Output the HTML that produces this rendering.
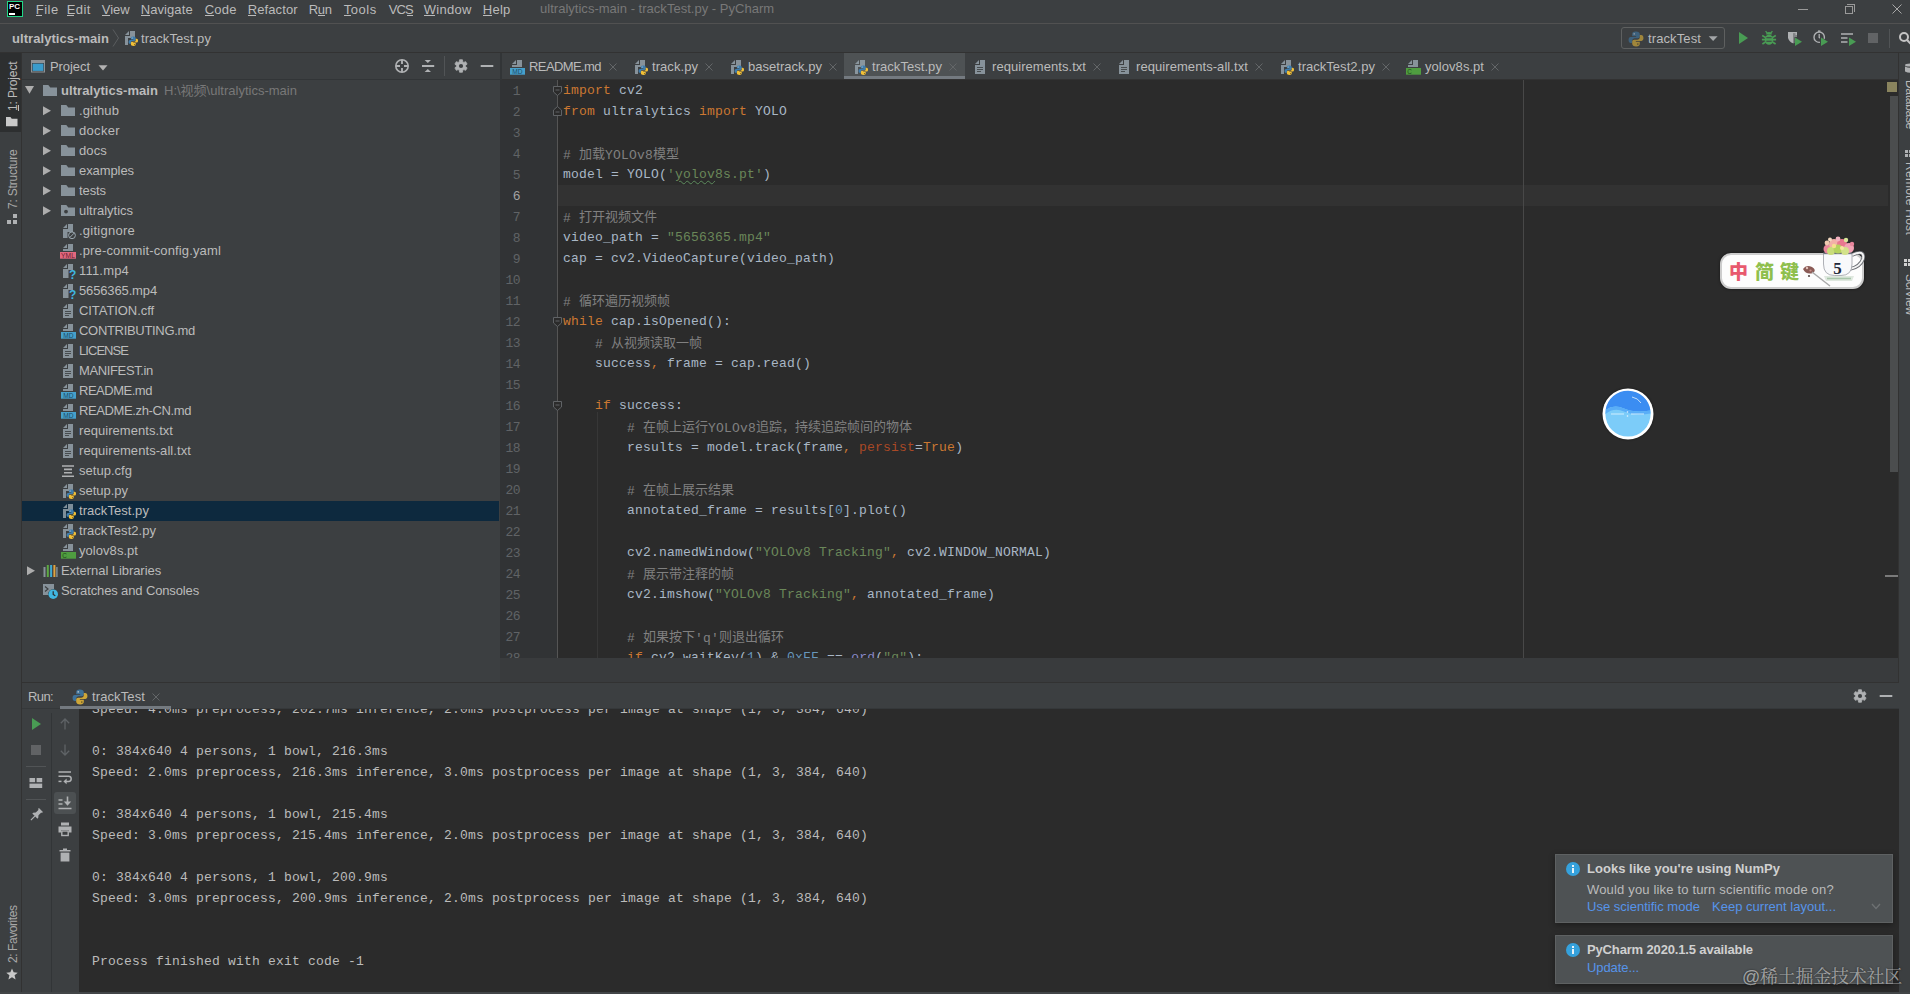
<!DOCTYPE html>
<html lang="zh"><head><meta charset="utf-8"><title>ultralytics-main - trackTest.py - PyCharm</title>
<style>
html,body{margin:0;padding:0;background:#3c3f41;}
body{width:1910px;height:994px;overflow:hidden;}
#root{position:relative;width:1910px;height:994px;overflow:hidden;background:#3c3f41;font-family:"Liberation Sans","Noto Sans CJK SC",sans-serif;font-size:13px;color:#bbbbbb;}
#root div,#root span.t,#root svg{position:absolute;}
#root svg{overflow:visible;}
span.t{white-space:pre;}
.code{font-family:"Liberation Mono","Noto Sans CJK SC",monospace;font-size:13px;letter-spacing:0.2px;white-space:pre;color:#a9b7c6;position:absolute;line-height:21px;height:21px;}
.code i{font-style:normal;}
.k{color:#cc7832}.s{color:#6a8759}.c{color:#808080}.n{color:#6897bb}.a{color:#aa4926}.b{color:#8888c6}
.cj{font-family:"Noto Sans CJK SC",sans-serif;letter-spacing:0;font-size:13px;position:relative;top:-1.5px;}
.code u{text-decoration:underline wavy #5c8a5c;text-decoration-thickness:1px;text-underline-offset:2px;}
.con{font-family:"Liberation Mono","Noto Sans CJK SC",monospace;font-size:13px;letter-spacing:0.2px;white-space:pre;color:#bbbbbb;position:absolute;line-height:21px;height:21px;}
.ln{font-family:"Liberation Mono",monospace;font-size:13px;letter-spacing:-0.6px;color:#606366;position:absolute;line-height:21px;height:21px;text-align:right;width:20px;}
.vt{position:absolute;white-space:pre;transform-origin:0 0;font-size:12px;color:#bbbbbb;line-height:14px;}

</style></head>
<body>
<div id="root">
<div style="left:0px;top:0px;width:1910px;height:23px;background:#3c3f41;"></div>
<div style="left:0px;top:23px;width:1910px;height:1px;background:#515151;"></div>
<div style="left:7px;top:1px;width:16px;height:16px;background:#000;box-shadow:0 0 0 1px #21d789 inset;"></div>
<span class="t " style="left:9px;top:2.5px;line-height:8px;font-family:'Liberation Sans','Noto Sans CJK SC',sans-serif;font-size:8px;font-weight:bold;color:#ffffff;letter-spacing:-0.06px;">PC</span>
<div style="left:9px;top:13px;width:6px;height:1.5px;background:#ffffff;"></div>
<span class="t " style="left:35.7px;top:0.6999999999999993px;line-height:18px;font-family:'Liberation Sans','Noto Sans CJK SC',sans-serif;font-size:13px;font-weight:normal;color:#bbbbbb;letter-spacing:0.51px;">File</span>
<span class="t " style="left:66.7px;top:0.6999999999999993px;line-height:18px;font-family:'Liberation Sans','Noto Sans CJK SC',sans-serif;font-size:13px;font-weight:normal;color:#bbbbbb;letter-spacing:0.40px;">Edit</span>
<span class="t " style="left:101.7px;top:0.6999999999999993px;line-height:18px;font-family:'Liberation Sans','Noto Sans CJK SC',sans-serif;font-size:13px;font-weight:normal;color:#bbbbbb;letter-spacing:0.01px;">View</span>
<span class="t " style="left:140.7px;top:0.6999999999999993px;line-height:18px;font-family:'Liberation Sans','Noto Sans CJK SC',sans-serif;font-size:13px;font-weight:normal;color:#bbbbbb;letter-spacing:0.09px;">Navigate</span>
<span class="t " style="left:204.7px;top:0.6999999999999993px;line-height:18px;font-family:'Liberation Sans','Noto Sans CJK SC',sans-serif;font-size:13px;font-weight:normal;color:#bbbbbb;letter-spacing:0.23px;">Code</span>
<span class="t " style="left:247.7px;top:0.6999999999999993px;line-height:18px;font-family:'Liberation Sans','Noto Sans CJK SC',sans-serif;font-size:13px;font-weight:normal;color:#bbbbbb;letter-spacing:0.11px;">Refactor</span>
<span class="t " style="left:308.7px;top:0.6999999999999993px;line-height:18px;font-family:'Liberation Sans','Noto Sans CJK SC',sans-serif;font-size:13px;font-weight:normal;color:#bbbbbb;letter-spacing:-0.29px;">Run</span>
<span class="t " style="left:343.7px;top:0.6999999999999993px;line-height:18px;font-family:'Liberation Sans','Noto Sans CJK SC',sans-serif;font-size:13px;font-weight:normal;color:#bbbbbb;letter-spacing:0.53px;">Tools</span>
<span class="t " style="left:388.7px;top:0.6999999999999993px;line-height:18px;font-family:'Liberation Sans','Noto Sans CJK SC',sans-serif;font-size:13px;font-weight:normal;color:#bbbbbb;letter-spacing:-0.91px;">VCS</span>
<span class="t " style="left:423.7px;top:0.6999999999999993px;line-height:18px;font-family:'Liberation Sans','Noto Sans CJK SC',sans-serif;font-size:13px;font-weight:normal;color:#bbbbbb;letter-spacing:0.29px;">Window</span>
<span class="t " style="left:482.7px;top:0.6999999999999993px;line-height:18px;font-family:'Liberation Sans','Noto Sans CJK SC',sans-serif;font-size:13px;font-weight:normal;color:#bbbbbb;letter-spacing:0.31px;">Help</span>
<span class="t " style="left:540px;top:0.0px;line-height:18px;font-family:'Liberation Sans','Noto Sans CJK SC',sans-serif;font-size:13px;font-weight:normal;color:#787878;letter-spacing:0.02px;">ultralytics-main - trackTest.py - PyCharm</span>
<div style="left:35.5px;top:15.3px;width:6px;height:1px;background:#bbbbbb;"></div>
<div style="left:66.5px;top:15.3px;width:7px;height:1px;background:#bbbbbb;"></div>
<div style="left:101.5px;top:15.3px;width:8px;height:1px;background:#bbbbbb;"></div>
<div style="left:140.5px;top:15.3px;width:9px;height:1px;background:#bbbbbb;"></div>
<div style="left:204.5px;top:15.3px;width:9px;height:1px;background:#bbbbbb;"></div>
<div style="left:247.5px;top:15.3px;width:8px;height:1px;background:#bbbbbb;"></div>
<div style="left:317.5px;top:15.3px;width:7px;height:1px;background:#bbbbbb;"></div>
<div style="left:343.5px;top:15.3px;width:7px;height:1px;background:#bbbbbb;"></div>
<div style="left:406.5px;top:15.3px;width:6px;height:1px;background:#bbbbbb;"></div>
<div style="left:423.5px;top:15.3px;width:11px;height:1px;background:#bbbbbb;"></div>
<div style="left:482.5px;top:15.3px;width:9px;height:1px;background:#bbbbbb;"></div>
<div style="left:1798px;top:9px;width:10px;height:1px;background:#9a9a9a;"></div>
<div style="left:1845px;top:6px;width:8px;height:8px;border:1px solid #9a9a9a;box-sizing:border-box;"></div>
<div style="left:1847px;top:4px;width:8px;height:8px;border-top:1px solid #9a9a9a;border-right:1px solid #9a9a9a;box-sizing:border-box;"></div>
<svg style="left:1892px;top:4px;" width="10" height="10" viewBox="0 0 10 10"><path d="M0.5 0.5 L9.5 9.5 M9.5 0.5 L0.5 9.5" stroke="#a8a8a8" stroke-width="1" fill="none"/></svg>
<div style="left:0px;top:24px;width:1910px;height:28px;background:#3c3f41;"></div>
<div style="left:0px;top:52px;width:1910px;height:1px;background:#323232;"></div>
<span class="t " style="left:12px;top:28.5px;line-height:20px;font-family:'Liberation Sans','Noto Sans CJK SC',sans-serif;font-size:13px;font-weight:bold;color:#bbbbbb;letter-spacing:0.06px;">ultralytics-main</span>
<svg style="left:112px;top:29px;" width="8" height="18" viewBox="0 0 8 18"><path d="M1 0.5 L6.5 9 L1 17.5" stroke="#5a5d5f" stroke-width="1" fill="none"/></svg>
<svg style="left:122px;top:30px;" width="16" height="16" viewBox="0 0 16 16"><path fill="#9aa7b0" fill-opacity="0.8" d="M7 1 L3 5 L7 5 Z"/><path fill="#9aa7b0" fill-opacity="0.8" d="M8 1 V6 H3 V15 H6 V8 H13 V1 Z"/><g transform="translate(6.575,6.575) scale(1.05)"><path fill="#3f7eae" d="M4.4 0 C2.6 0 2.2 0.8 2.2 1.6 V2.8 H4.6 V3.3 H1.4 C0.4 3.3 0 4.1 0 5.1 C0 6.2 0.5 6.9 1.4 6.9 H2.2 V5.6 C2.2 4.7 2.9 4.1 3.8 4.1 H5.6 C6.3 4.1 6.8 3.6 6.8 2.9 V1.6 C6.8 0.6 5.9 0 4.4 0 Z"/><path fill="#f2c037" d="M4.6 9 C6.4 9 6.8 8.2 6.8 7.4 V6.2 H4.4 V5.7 H7.6 C8.6 5.7 9 4.9 9 3.9 C9 2.8 8.5 2.1 7.6 2.1 H6.8 V3.4 C6.8 4.3 6.1 4.9 5.2 4.9 H3.4 C2.7 4.9 2.2 5.4 2.2 6.1 V7.4 C2.2 8.4 3.1 9 4.6 9 Z"/><circle cx="3.4" cy="1.4" r="0.5" fill="#d8e4ee"/><circle cx="5.6" cy="7.6" r="0.5" fill="#6b5a20"/></g></svg>
<span class="t " style="left:141px;top:28.5px;line-height:20px;font-family:'Liberation Sans','Noto Sans CJK SC',sans-serif;font-size:13px;font-weight:normal;color:#bbbbbb;letter-spacing:0.05px;">trackTest.py</span>
<div style="left:1621px;top:27px;width:104px;height:22px;border:1px solid #5e6060;border-radius:3px;box-sizing:border-box;"></div>
<svg style="left:1628px;top:30.7px;opacity:0.55;" width="16" height="16" viewBox="0 0 16 16"><g transform="translate(0.5750000000000002,0.5750000000000002) scale(1.65)"><path fill="#3f7eae" d="M4.4 0 C2.6 0 2.2 0.8 2.2 1.6 V2.8 H4.6 V3.3 H1.4 C0.4 3.3 0 4.1 0 5.1 C0 6.2 0.5 6.9 1.4 6.9 H2.2 V5.6 C2.2 4.7 2.9 4.1 3.8 4.1 H5.6 C6.3 4.1 6.8 3.6 6.8 2.9 V1.6 C6.8 0.6 5.9 0 4.4 0 Z"/><path fill="#f2c037" d="M4.6 9 C6.4 9 6.8 8.2 6.8 7.4 V6.2 H4.4 V5.7 H7.6 C8.6 5.7 9 4.9 9 3.9 C9 2.8 8.5 2.1 7.6 2.1 H6.8 V3.4 C6.8 4.3 6.1 4.9 5.2 4.9 H3.4 C2.7 4.9 2.2 5.4 2.2 6.1 V7.4 C2.2 8.4 3.1 9 4.6 9 Z"/><circle cx="3.4" cy="1.4" r="0.5" fill="#d8e4ee"/><circle cx="5.6" cy="7.6" r="0.5" fill="#6b5a20"/></g></svg>
<span class="t " style="left:1648px;top:28.6px;line-height:20px;font-family:'Liberation Sans','Noto Sans CJK SC',sans-serif;font-size:13px;font-weight:normal;color:#bbbbbb;letter-spacing:0.11px;">trackTest</span>
<svg style="left:1708px;top:36px;" width="10" height="6" viewBox="0 0 10 6"><path d="M0.7 0.3 H9.6 L5.1 4.9 Z" fill="#a3a6a8"/></svg>
<svg style="left:1735px;top:30px;" width="16" height="16" viewBox="0 0 16 16"><path fill="#499c54" d="M4 2 L13 8 L4 14 Z"/></svg>
<svg style="left:1761px;top:30px;" width="16" height="16" viewBox="0 0 16 16"><ellipse cx="8" cy="9.6" rx="4.3" ry="5.2" fill="#499c54"/><path d="M5.2 4.6 A2.8 2.6 0 0 1 10.8 4.6 Z" fill="#499c54"/><path d="M4.6 1.2 L6.4 3.4 M11.4 1.2 L9.6 3.4" stroke="#499c54" stroke-width="1.3" fill="none"/><path d="M1.2 5.6 L4.6 7.4 M14.8 5.6 L11.4 7.4 M0.9 9.6 H4 M15.1 9.6 H12 M1.4 14 L4.6 12 M14.6 14 L11.4 12" stroke="#499c54" stroke-width="1.7" fill="none"/><path d="M5.4 7.8 H10.6 M5.4 11.2 H10.6" stroke="#3c3f41" stroke-width="1.1"/></svg>
<svg style="left:1786px;top:30px;" width="16" height="16" viewBox="0 0 16 16"><path fill="#afb1b3" d="M2 2 H11 V5 H9.5 V3.6 H7 V13.2 Q3.2 12 2 8 Z"/><path fill="#afb1b3" fill-opacity="0.6" d="M7 3.6 H11 V7 H8.5 V13 Q7.6 13.3 7 13.4 Z"/><path fill="#499c54" d="M9 7.5 L16 11.7 L9 16 Z"/></svg>
<svg style="left:1812px;top:30px;" width="16" height="16" viewBox="0 0 16 16"><circle cx="7.2" cy="7.2" r="5.2" fill="none" stroke="#afb1b3" stroke-width="1.4"/><path d="M7.2 4 V7.4 L9.2 8.6" fill="none" stroke="#afb1b3" stroke-width="1.3"/><rect x="6" y="0.4" width="2.4" height="1.5" fill="#afb1b3"/><path fill="#3c3f41" d="M8 6.6 L17 11.7 L8 17 Z"/><path fill="#499c54" d="M9 7.5 L16 11.7 L9 16 Z"/></svg>
<svg style="left:1840px;top:30.5px;" width="16" height="16" viewBox="0 0 16 16"><path d="M1 3 H13 M1 7 H7.5 M1 11 H7.5" stroke="#afb1b3" stroke-width="1.7" fill="none"/><path fill="#499c54" d="M9 6.5 L16 10.7 L9 15 Z"/></svg>
<svg style="left:1865px;top:30px;" width="16" height="16" viewBox="0 0 16 16"><rect x="3" y="3" width="10" height="10" fill="#616365"/></svg>
<div style="left:1889px;top:29px;width:1px;height:19px;background:#515456;"></div>
<svg style="left:1896.7px;top:29.5px;" width="16" height="16" viewBox="0 0 16 16"><circle cx="7" cy="7" r="4" fill="none" stroke="#c4c4c4" stroke-width="2"/><path d="M10 10 L14 14" stroke="#c4c4c4" stroke-width="2.2"/></svg>
<div style="left:0px;top:53px;width:21px;height:941px;background:#3c3f41;"></div>
<div style="left:21px;top:53px;width:1px;height:941px;background:#323232;"></div>
<div style="left:0px;top:53px;width:21px;height:79px;background:#2d2f30;"></div>
<span class="vt" style="left:5.8px;top:111.3px;transform:rotate(-90deg);font-size:12px;color:#bbbbbb;letter-spacing:-0.12px;">1: Project</span>
<div style="left:17.8px;top:105px;width:1px;height:6px;background:#bbbbbb;"></div>
<svg style="left:5.8px;top:117px;" width="11.5" height="9.3" viewBox="0 0 13 10.5"><path fill="#c9c9c9" d="M0 0 H5 L6.5 2 H13 V10.5 H0 Z"/></svg>
<span class="vt" style="left:5.5px;top:209px;transform:rotate(-90deg);font-size:12px;color:#a8a8a8;letter-spacing:-0.21px;">7: Structure</span>
<svg style="left:7px;top:213px;" width="12" height="12" viewBox="0 0 12 12"><rect x="0" y="7" width="4" height="4" fill="#afb1b3"/><rect x="6" y="7" width="4" height="4" fill="#afb1b3"/><rect x="6" y="1" width="4" height="4" fill="#afb1b3"/></svg>
<span class="vt" style="left:5.5px;top:962.5px;transform:rotate(-90deg);font-size:12px;color:#a8a8a8;letter-spacing:-0.43px;">2: Favorites</span>
<svg style="left:5.5px;top:968px;" width="12" height="12" viewBox="0 0 14 14"><path fill="#c8c8c8" d="M7 0.5 L8.9 5 L13.7 5.4 L10 8.6 L11.2 13.4 L7 10.8 L2.8 13.4 L4 8.6 L0.3 5.4 L5.1 5 Z"/></svg>
<div style="left:22px;top:53px;width:478px;height:26px;background:#3c3f41;"></div>
<div style="left:22px;top:79px;width:478px;height:1px;background:#323537;"></div>
<svg style="left:30px;top:58.3px;" width="16" height="16" viewBox="0 0 16 16"><rect x="1" y="2" width="14" height="12.5" fill="#8d9296"/><rect x="2" y="5" width="12" height="8.5" fill="#3c3f41"/><rect x="2.6" y="5.6" width="10.8" height="7.3" fill="#3a9ccc"/></svg>
<span class="t " style="left:50px;top:56.5px;line-height:20px;font-family:'Liberation Sans','Noto Sans CJK SC',sans-serif;font-size:13px;font-weight:normal;color:#bbbbbb;letter-spacing:-0.07px;">Project</span>
<svg style="left:97.8px;top:64.5px;" width="10" height="6" viewBox="0 0 10 6"><path d="M0.5 0.3 H9.5 L5 5.5 Z" fill="#b2b2b2"/></svg>
<svg style="left:394px;top:58px;" width="16" height="16" viewBox="0 0 16 16"><circle cx="8" cy="8" r="6.2" fill="none" stroke="#afb1b3" stroke-width="1.6"/><path d="M8 1.8 V6 M8 10 V14.2 M1.8 8 H6 M10 8 H14.2" stroke="#afb1b3" stroke-width="1.9" fill="none"/></svg>
<svg style="left:420px;top:58px;" width="16" height="16" viewBox="0 0 16 16"><rect x="2" y="7" width="12.2" height="2" fill="#afb1b3"/><path d="M4.6 2 H11 L7.8 5.1 Z" fill="#afb1b3"/><path d="M4.6 14 H11 L7.8 10.9 Z" fill="#afb1b3"/></svg>
<div style="left:444px;top:56px;width:1px;height:20px;background:#515456;"></div>
<svg style="left:453px;top:58px;" width="16" height="16" viewBox="0 0 16 16"><polygon points="6.28,3.73 6.56,1.76 9.44,1.76 9.72,3.73 10.83,4.38 12.68,3.64 14.12,6.13 12.56,7.36 12.56,8.64 14.12,9.87 12.68,12.36 10.83,11.62 9.72,12.27 9.44,14.24 6.56,14.24 6.28,12.27 5.17,11.62 3.32,12.36 1.88,9.87 3.44,8.64 3.44,7.36 1.88,6.13 3.32,3.64 5.17,4.38" fill="#afb1b3" stroke="#afb1b3" stroke-width="0.8" stroke-linejoin="round"/><circle cx="8" cy="8" r="2.1" fill="#3c3f41"/></svg>
<svg style="left:479px;top:58px;" width="16" height="16" viewBox="0 0 16 16"><rect x="1.7" y="7" width="12.6" height="2" fill="#afb1b3"/></svg>
<svg style="left:22px;top:83px;" width="16" height="16" viewBox="0 0 16 16"><path fill="#adadad" d="M3 3 H12 L7.5 10.8 Z"/></svg>
<svg style="left:42px;top:83px;" width="16" height="16" viewBox="0 0 16 16"><path fill="#9aa7b0" fill-opacity="0.8" d="M1 2 H6.3 L8.3 4.5 H15 V13 H1 Z"/></svg>
<span class="t " style="left:61px;top:81.0px;line-height:20px;font-family:'Liberation Sans','Noto Sans CJK SC',sans-serif;font-size:13px;font-weight:bold;color:#bbbbbb;letter-spacing:0.06px;">ultralytics-main</span>
<span class="t " style="left:164px;top:81.0px;line-height:20px;font-family:'Liberation Sans','Noto Sans CJK SC',sans-serif;font-size:13px;font-weight:normal;color:#787878;letter-spacing:0.00px;">H:\视频\ultralytics-main</span>
<svg style="left:38px;top:103px;" width="16" height="16" viewBox="0 0 16 16"><path fill="#adadad" d="M5 3.2 L13 7.7 L5 12.2 Z"/></svg>
<svg style="left:60px;top:103px;" width="16" height="16" viewBox="0 0 16 16"><path fill="#9aa7b0" fill-opacity="0.8" d="M1 2 H6.3 L8.3 4.5 H15 V13 H1 Z"/></svg>
<span class="t " style="left:79px;top:101.0px;line-height:20px;font-family:'Liberation Sans','Noto Sans CJK SC',sans-serif;font-size:13px;font-weight:normal;color:#bbbbbb;letter-spacing:0.14px;">.github</span>
<svg style="left:38px;top:123px;" width="16" height="16" viewBox="0 0 16 16"><path fill="#adadad" d="M5 3.2 L13 7.7 L5 12.2 Z"/></svg>
<svg style="left:60px;top:123px;" width="16" height="16" viewBox="0 0 16 16"><path fill="#9aa7b0" fill-opacity="0.8" d="M1 2 H6.3 L8.3 4.5 H15 V13 H1 Z"/></svg>
<span class="t " style="left:79px;top:121.0px;line-height:20px;font-family:'Liberation Sans','Noto Sans CJK SC',sans-serif;font-size:13px;font-weight:normal;color:#bbbbbb;letter-spacing:0.33px;">docker</span>
<svg style="left:38px;top:143px;" width="16" height="16" viewBox="0 0 16 16"><path fill="#adadad" d="M5 3.2 L13 7.7 L5 12.2 Z"/></svg>
<svg style="left:60px;top:143px;" width="16" height="16" viewBox="0 0 16 16"><path fill="#9aa7b0" fill-opacity="0.8" d="M1 2 H6.3 L8.3 4.5 H15 V13 H1 Z"/></svg>
<span class="t " style="left:79px;top:141.0px;line-height:20px;font-family:'Liberation Sans','Noto Sans CJK SC',sans-serif;font-size:13px;font-weight:normal;color:#bbbbbb;letter-spacing:0.13px;">docs</span>
<svg style="left:38px;top:163px;" width="16" height="16" viewBox="0 0 16 16"><path fill="#adadad" d="M5 3.2 L13 7.7 L5 12.2 Z"/></svg>
<svg style="left:60px;top:163px;" width="16" height="16" viewBox="0 0 16 16"><path fill="#9aa7b0" fill-opacity="0.8" d="M1 2 H6.3 L8.3 4.5 H15 V13 H1 Z"/></svg>
<span class="t " style="left:79px;top:161.0px;line-height:20px;font-family:'Liberation Sans','Noto Sans CJK SC',sans-serif;font-size:13px;font-weight:normal;color:#bbbbbb;letter-spacing:-0.08px;">examples</span>
<svg style="left:38px;top:183px;" width="16" height="16" viewBox="0 0 16 16"><path fill="#adadad" d="M5 3.2 L13 7.7 L5 12.2 Z"/></svg>
<svg style="left:60px;top:183px;" width="16" height="16" viewBox="0 0 16 16"><path fill="#9aa7b0" fill-opacity="0.8" d="M1 2 H6.3 L8.3 4.5 H15 V13 H1 Z"/></svg>
<span class="t " style="left:79px;top:181.0px;line-height:20px;font-family:'Liberation Sans','Noto Sans CJK SC',sans-serif;font-size:13px;font-weight:normal;color:#bbbbbb;letter-spacing:-0.09px;">tests</span>
<svg style="left:38px;top:203px;" width="16" height="16" viewBox="0 0 16 16"><path fill="#adadad" d="M5 3.2 L13 7.7 L5 12.2 Z"/></svg>
<svg style="left:60px;top:203px;" width="16" height="16" viewBox="0 0 16 16"><path fill="#9aa7b0" fill-opacity="0.8" d="M1 2 H6.3 L8.3 4.5 H15 V13 H1 Z"/><circle cx="6" cy="8.6" r="1.9" fill="#3c3f41"/></svg>
<span class="t " style="left:79px;top:201.0px;line-height:20px;font-family:'Liberation Sans','Noto Sans CJK SC',sans-serif;font-size:13px;font-weight:normal;color:#bbbbbb;letter-spacing:-0.02px;">ultralytics</span>
<svg style="left:60px;top:223px;" width="16" height="16" viewBox="0 0 16 16"><path fill="#9aa7b0" fill-opacity="0.8" d="M7 1 L3 5 L7 5 Z"/><path fill="#9aa7b0" fill-opacity="0.8" d="M8 1 V6 H3 V15 H7.5 V9 H13 V1 Z"/><circle cx="12" cy="12.3" r="3.4" fill="none" stroke="#9aa7b0" stroke-width="1"/><path d="M9.6 14.7 L14.4 9.9" stroke="#9aa7b0" stroke-width="1"/></svg>
<span class="t " style="left:79px;top:221.0px;line-height:20px;font-family:'Liberation Sans','Noto Sans CJK SC',sans-serif;font-size:13px;font-weight:normal;color:#bbbbbb;letter-spacing:0.25px;">.gitignore</span>
<svg style="left:60px;top:243px;" width="16" height="16" viewBox="0 0 16 16"><path fill="#9aa7b0" fill-opacity="0.8" d="M7 1 L3 5 L7 5 Z"/><path fill="#9aa7b0" fill-opacity="0.8" d="M8 1 V6 H3 V8 H13 V1 Z"/><rect x="0" y="9" width="16" height="6.7" fill="#e2687f"/><text x="8.0" y="14.7" font-family="Liberation Sans,sans-serif" font-size="6.7" text-anchor="middle" fill="#6a1f30">YML</text></svg>
<span class="t " style="left:79px;top:241.0px;line-height:20px;font-family:'Liberation Sans','Noto Sans CJK SC',sans-serif;font-size:13px;font-weight:normal;color:#bbbbbb;letter-spacing:0.14px;">.pre-commit-config.yaml</span>
<svg style="left:60px;top:263px;" width="16" height="16" viewBox="0 0 16 16"><path fill="#9aa7b0" fill-opacity="0.8" d="M7 1 L3 5 L7 5 Z"/><path fill="#9aa7b0" fill-opacity="0.8" d="M8 1 V6 H3 V15 H8.5 V7 H13 V1 Z"/><text x="12.6" y="15.6" font-family="Liberation Sans,sans-serif" font-weight="bold" font-size="12" text-anchor="middle" fill="#40b6e0">?</text></svg>
<span class="t " style="left:79px;top:261.0px;line-height:20px;font-family:'Liberation Sans','Noto Sans CJK SC',sans-serif;font-size:13px;font-weight:normal;color:#bbbbbb;letter-spacing:0.19px;">111.mp4</span>
<svg style="left:60px;top:283px;" width="16" height="16" viewBox="0 0 16 16"><path fill="#9aa7b0" fill-opacity="0.8" d="M7 1 L3 5 L7 5 Z"/><path fill="#9aa7b0" fill-opacity="0.8" d="M8 1 V6 H3 V15 H8.5 V7 H13 V1 Z"/><text x="12.6" y="15.6" font-family="Liberation Sans,sans-serif" font-weight="bold" font-size="12" text-anchor="middle" fill="#40b6e0">?</text></svg>
<span class="t " style="left:79px;top:281.0px;line-height:20px;font-family:'Liberation Sans','Noto Sans CJK SC',sans-serif;font-size:13px;font-weight:normal;color:#bbbbbb;letter-spacing:-0.14px;">5656365.mp4</span>
<svg style="left:60px;top:303px;" width="16" height="16" viewBox="0 0 16 16"><path fill="#9aa7b0" fill-opacity="0.8" d="M7 1 L3 5 L7 5 Z"/><path fill="#9aa7b0" fill-opacity="0.8" d="M8 1 V6 H3 V15 H13 V1 Z"/><path stroke="#3c3f41" stroke-opacity="0.85" stroke-width="1" d="M5 8.5 H11 M5 10.5 H11 M5 12.5 H9"/></svg>
<span class="t " style="left:79px;top:301.0px;line-height:20px;font-family:'Liberation Sans','Noto Sans CJK SC',sans-serif;font-size:13px;font-weight:normal;color:#bbbbbb;letter-spacing:-0.07px;">CITATION.cff</span>
<svg style="left:60px;top:323px;" width="16" height="16" viewBox="0 0 16 16"><path fill="#9aa7b0" fill-opacity="0.8" d="M7 1 L3 5 L7 5 Z"/><path fill="#9aa7b0" fill-opacity="0.8" d="M8 1 V6 H3 V8 H13 V1 Z"/><rect x="1" y="9" width="15" height="6.7" fill="#46a0cc"/><text x="8.5" y="14.7" font-family="Liberation Sans,sans-serif" font-size="6.6" text-anchor="middle" fill="#1d4a66">MD</text></svg>
<span class="t " style="left:79px;top:321.0px;line-height:20px;font-family:'Liberation Sans','Noto Sans CJK SC',sans-serif;font-size:13px;font-weight:normal;color:#bbbbbb;letter-spacing:-0.31px;">CONTRIBUTING.md</span>
<svg style="left:60px;top:343px;" width="16" height="16" viewBox="0 0 16 16"><path fill="#9aa7b0" fill-opacity="0.8" d="M7 1 L3 5 L7 5 Z"/><path fill="#9aa7b0" fill-opacity="0.8" d="M8 1 V6 H3 V15 H13 V1 Z"/><path stroke="#3c3f41" stroke-opacity="0.85" stroke-width="1" d="M5 8.5 H11 M5 10.5 H11 M5 12.5 H9"/></svg>
<span class="t " style="left:79px;top:341.0px;line-height:20px;font-family:'Liberation Sans','Noto Sans CJK SC',sans-serif;font-size:13px;font-weight:normal;color:#bbbbbb;letter-spacing:-0.95px;">LICENSE</span>
<svg style="left:60px;top:363px;" width="16" height="16" viewBox="0 0 16 16"><path fill="#9aa7b0" fill-opacity="0.8" d="M7 1 L3 5 L7 5 Z"/><path fill="#9aa7b0" fill-opacity="0.8" d="M8 1 V6 H3 V15 H13 V1 Z"/><path stroke="#3c3f41" stroke-opacity="0.85" stroke-width="1" d="M5 8.5 H11 M5 10.5 H11 M5 12.5 H9"/></svg>
<span class="t " style="left:79px;top:361.0px;line-height:20px;font-family:'Liberation Sans','Noto Sans CJK SC',sans-serif;font-size:13px;font-weight:normal;color:#bbbbbb;letter-spacing:-0.37px;">MANIFEST.in</span>
<svg style="left:60px;top:383px;" width="16" height="16" viewBox="0 0 16 16"><path fill="#9aa7b0" fill-opacity="0.8" d="M7 1 L3 5 L7 5 Z"/><path fill="#9aa7b0" fill-opacity="0.8" d="M8 1 V6 H3 V8 H13 V1 Z"/><rect x="1" y="9" width="15" height="6.7" fill="#46a0cc"/><text x="8.5" y="14.7" font-family="Liberation Sans,sans-serif" font-size="6.6" text-anchor="middle" fill="#1d4a66">MD</text></svg>
<span class="t " style="left:79px;top:381.0px;line-height:20px;font-family:'Liberation Sans','Noto Sans CJK SC',sans-serif;font-size:13px;font-weight:normal;color:#bbbbbb;letter-spacing:-0.48px;">README.md</span>
<svg style="left:60px;top:403px;" width="16" height="16" viewBox="0 0 16 16"><path fill="#9aa7b0" fill-opacity="0.8" d="M7 1 L3 5 L7 5 Z"/><path fill="#9aa7b0" fill-opacity="0.8" d="M8 1 V6 H3 V8 H13 V1 Z"/><rect x="1" y="9" width="15" height="6.7" fill="#46a0cc"/><text x="8.5" y="14.7" font-family="Liberation Sans,sans-serif" font-size="6.6" text-anchor="middle" fill="#1d4a66">MD</text></svg>
<span class="t " style="left:79px;top:401.0px;line-height:20px;font-family:'Liberation Sans','Noto Sans CJK SC',sans-serif;font-size:13px;font-weight:normal;color:#bbbbbb;letter-spacing:-0.38px;">README.zh-CN.md</span>
<svg style="left:60px;top:423px;" width="16" height="16" viewBox="0 0 16 16"><path fill="#9aa7b0" fill-opacity="0.8" d="M7 1 L3 5 L7 5 Z"/><path fill="#9aa7b0" fill-opacity="0.8" d="M8 1 V6 H3 V15 H13 V1 Z"/><path stroke="#3c3f41" stroke-opacity="0.85" stroke-width="1" d="M5 8.5 H11 M5 10.5 H11 M5 12.5 H9"/></svg>
<span class="t " style="left:79px;top:421.0px;line-height:20px;font-family:'Liberation Sans','Noto Sans CJK SC',sans-serif;font-size:13px;font-weight:normal;color:#bbbbbb;letter-spacing:0.05px;">requirements.txt</span>
<svg style="left:60px;top:443px;" width="16" height="16" viewBox="0 0 16 16"><path fill="#9aa7b0" fill-opacity="0.8" d="M7 1 L3 5 L7 5 Z"/><path fill="#9aa7b0" fill-opacity="0.8" d="M8 1 V6 H3 V15 H13 V1 Z"/><path stroke="#3c3f41" stroke-opacity="0.85" stroke-width="1" d="M5 8.5 H11 M5 10.5 H11 M5 12.5 H9"/></svg>
<span class="t " style="left:79px;top:441.0px;line-height:20px;font-family:'Liberation Sans','Noto Sans CJK SC',sans-serif;font-size:13px;font-weight:normal;color:#bbbbbb;letter-spacing:0.07px;">requirements-all.txt</span>
<svg style="left:60px;top:463px;" width="16" height="16" viewBox="0 0 16 16"><path fill="none" stroke="#afb1b3" stroke-width="1.6" d="M2 3 H14 M4 6.4 H12 M4 9.8 H12 M2 13.2 H14"/></svg>
<span class="t " style="left:79px;top:461.0px;line-height:20px;font-family:'Liberation Sans','Noto Sans CJK SC',sans-serif;font-size:13px;font-weight:normal;color:#bbbbbb;letter-spacing:0.03px;">setup.cfg</span>
<svg style="left:60px;top:483px;" width="16" height="16" viewBox="0 0 16 16"><path fill="#9aa7b0" fill-opacity="0.8" d="M7 1 L3 5 L7 5 Z"/><path fill="#9aa7b0" fill-opacity="0.8" d="M8 1 V6 H3 V15 H6 V8 H13 V1 Z"/><g transform="translate(6.575,6.575) scale(1.05)"><path fill="#3f7eae" d="M4.4 0 C2.6 0 2.2 0.8 2.2 1.6 V2.8 H4.6 V3.3 H1.4 C0.4 3.3 0 4.1 0 5.1 C0 6.2 0.5 6.9 1.4 6.9 H2.2 V5.6 C2.2 4.7 2.9 4.1 3.8 4.1 H5.6 C6.3 4.1 6.8 3.6 6.8 2.9 V1.6 C6.8 0.6 5.9 0 4.4 0 Z"/><path fill="#f2c037" d="M4.6 9 C6.4 9 6.8 8.2 6.8 7.4 V6.2 H4.4 V5.7 H7.6 C8.6 5.7 9 4.9 9 3.9 C9 2.8 8.5 2.1 7.6 2.1 H6.8 V3.4 C6.8 4.3 6.1 4.9 5.2 4.9 H3.4 C2.7 4.9 2.2 5.4 2.2 6.1 V7.4 C2.2 8.4 3.1 9 4.6 9 Z"/><circle cx="3.4" cy="1.4" r="0.5" fill="#d8e4ee"/><circle cx="5.6" cy="7.6" r="0.5" fill="#6b5a20"/></g></svg>
<span class="t " style="left:79px;top:481.0px;line-height:20px;font-family:'Liberation Sans','Noto Sans CJK SC',sans-serif;font-size:13px;font-weight:normal;color:#bbbbbb;letter-spacing:-0.02px;">setup.py</span>
<div style="left:22px;top:501px;width:477px;height:20px;background:#0d293e;"></div>
<svg style="left:60px;top:503px;" width="16" height="16" viewBox="0 0 16 16"><path fill="#9aa7b0" fill-opacity="0.8" d="M7 1 L3 5 L7 5 Z"/><path fill="#9aa7b0" fill-opacity="0.8" d="M8 1 V6 H3 V15 H6 V8 H13 V1 Z"/><g transform="translate(6.575,6.575) scale(1.05)"><path fill="#3f7eae" d="M4.4 0 C2.6 0 2.2 0.8 2.2 1.6 V2.8 H4.6 V3.3 H1.4 C0.4 3.3 0 4.1 0 5.1 C0 6.2 0.5 6.9 1.4 6.9 H2.2 V5.6 C2.2 4.7 2.9 4.1 3.8 4.1 H5.6 C6.3 4.1 6.8 3.6 6.8 2.9 V1.6 C6.8 0.6 5.9 0 4.4 0 Z"/><path fill="#f2c037" d="M4.6 9 C6.4 9 6.8 8.2 6.8 7.4 V6.2 H4.4 V5.7 H7.6 C8.6 5.7 9 4.9 9 3.9 C9 2.8 8.5 2.1 7.6 2.1 H6.8 V3.4 C6.8 4.3 6.1 4.9 5.2 4.9 H3.4 C2.7 4.9 2.2 5.4 2.2 6.1 V7.4 C2.2 8.4 3.1 9 4.6 9 Z"/><circle cx="3.4" cy="1.4" r="0.5" fill="#d8e4ee"/><circle cx="5.6" cy="7.6" r="0.5" fill="#6b5a20"/></g></svg>
<span class="t " style="left:79px;top:501.0px;line-height:20px;font-family:'Liberation Sans','Noto Sans CJK SC',sans-serif;font-size:13px;font-weight:normal;color:#bbbbbb;letter-spacing:0.05px;">trackTest.py</span>
<svg style="left:60px;top:523px;" width="16" height="16" viewBox="0 0 16 16"><path fill="#9aa7b0" fill-opacity="0.8" d="M7 1 L3 5 L7 5 Z"/><path fill="#9aa7b0" fill-opacity="0.8" d="M8 1 V6 H3 V15 H6 V8 H13 V1 Z"/><g transform="translate(6.575,6.575) scale(1.05)"><path fill="#3f7eae" d="M4.4 0 C2.6 0 2.2 0.8 2.2 1.6 V2.8 H4.6 V3.3 H1.4 C0.4 3.3 0 4.1 0 5.1 C0 6.2 0.5 6.9 1.4 6.9 H2.2 V5.6 C2.2 4.7 2.9 4.1 3.8 4.1 H5.6 C6.3 4.1 6.8 3.6 6.8 2.9 V1.6 C6.8 0.6 5.9 0 4.4 0 Z"/><path fill="#f2c037" d="M4.6 9 C6.4 9 6.8 8.2 6.8 7.4 V6.2 H4.4 V5.7 H7.6 C8.6 5.7 9 4.9 9 3.9 C9 2.8 8.5 2.1 7.6 2.1 H6.8 V3.4 C6.8 4.3 6.1 4.9 5.2 4.9 H3.4 C2.7 4.9 2.2 5.4 2.2 6.1 V7.4 C2.2 8.4 3.1 9 4.6 9 Z"/><circle cx="3.4" cy="1.4" r="0.5" fill="#d8e4ee"/><circle cx="5.6" cy="7.6" r="0.5" fill="#6b5a20"/></g></svg>
<span class="t " style="left:79px;top:521.0px;line-height:20px;font-family:'Liberation Sans','Noto Sans CJK SC',sans-serif;font-size:13px;font-weight:normal;color:#bbbbbb;letter-spacing:0.03px;">trackTest2.py</span>
<svg style="left:60px;top:543px;" width="16" height="16" viewBox="0 0 16 16"><path fill="#9aa7b0" fill-opacity="0.8" d="M7 1 L3 5 L7 5 Z"/><path fill="#9aa7b0" fill-opacity="0.8" d="M8 1 V6 H3 V8 H13 V1 Z"/><rect x="1" y="9" width="15" height="6.7" fill="#4f9d40"/><text x="2.2" y="14.7" font-family="Liberation Sans,sans-serif" font-size="6.4" text-anchor="start" fill="#1f4a18">C</text></svg>
<span class="t " style="left:79px;top:541.0px;line-height:20px;font-family:'Liberation Sans','Noto Sans CJK SC',sans-serif;font-size:13px;font-weight:normal;color:#bbbbbb;letter-spacing:0.05px;">yolov8s.pt</span>
<svg style="left:22px;top:563px;" width="16" height="16" viewBox="0 0 16 16"><path fill="#adadad" d="M5 3.2 L13 7.7 L5 12.2 Z"/></svg>
<svg style="left:42px;top:563px;" width="16" height="16" viewBox="0 0 16 16"><rect x="1.5" y="4" width="2" height="10" fill="#87939a"/><rect x="4.8" y="2" width="2" height="12" fill="#62b543" fill-opacity="0.9"/><rect x="8.1" y="2" width="2" height="12" fill="#40b6e0" fill-opacity="0.9"/><rect x="11.4" y="2" width="2" height="12" fill="#f4af3d" fill-opacity="0.9"/><rect x="14.2" y="4" width="1.4" height="10" fill="#87939a"/></svg>
<span class="t " style="left:61px;top:561.0px;line-height:20px;font-family:'Liberation Sans','Noto Sans CJK SC',sans-serif;font-size:13px;font-weight:normal;color:#bbbbbb;letter-spacing:-0.06px;">External Libraries</span>
<svg style="left:42px;top:583px;" width="16" height="16" viewBox="0 0 16 16"><path fill="#9aa7b0" fill-opacity="0.8" d="M1 1 H12 V6 A5.5 5.5 0 0 0 6 12 H1 Z"/><path d="M3 3.5 L6 6 L3 8.5" fill="none" stroke="#3c3f41" stroke-width="1.2"/><circle cx="11.2" cy="11.2" r="4.8" fill="#40b6e0"/><path d="M11.2 8.3 V11.4 L13.3 12.8" fill="none" stroke="#2b2b2b" stroke-width="1.2"/></svg>
<span class="t " style="left:61px;top:581.0px;line-height:20px;font-family:'Liberation Sans','Noto Sans CJK SC',sans-serif;font-size:13px;font-weight:normal;color:#bbbbbb;letter-spacing:-0.13px;">Scratches and Consoles</span>
<div style="left:500px;top:53px;width:1399px;height:26px;background:#3c3f41;"></div>
<div style="left:500px;top:79px;width:1399px;height:1px;background:#323232;"></div>
<svg style="left:509px;top:59px;" width="16" height="16" viewBox="0 0 16 16"><path fill="#9aa7b0" fill-opacity="0.8" d="M7 1 L3 5 L7 5 Z"/><path fill="#9aa7b0" fill-opacity="0.8" d="M8 1 V6 H3 V8 H13 V1 Z"/><rect x="1" y="9" width="15" height="6.7" fill="#46a0cc"/><text x="8.5" y="14.7" font-family="Liberation Sans,sans-serif" font-size="6.6" text-anchor="middle" fill="#1d4a66">MD</text></svg>
<span class="t " style="left:529px;top:57.0px;line-height:20px;font-family:'Liberation Sans','Noto Sans CJK SC',sans-serif;font-size:13px;font-weight:normal;color:#bbbbbb;letter-spacing:-0.59px;">README.md</span>
<svg style="left:609px;top:63px;" width="8" height="8" viewBox="0 0 8 8"><path d="M0.5 0.5 L7.5 7.5 M7.5 0.5 L0.5 7.5" stroke="#636668" stroke-width="1" fill="none"/></svg>
<svg style="left:632px;top:59px;" width="16" height="16" viewBox="0 0 16 16"><path fill="#9aa7b0" fill-opacity="0.8" d="M7 1 L3 5 L7 5 Z"/><path fill="#9aa7b0" fill-opacity="0.8" d="M8 1 V6 H3 V15 H6 V8 H13 V1 Z"/><g transform="translate(6.575,6.575) scale(1.05)"><path fill="#3f7eae" d="M4.4 0 C2.6 0 2.2 0.8 2.2 1.6 V2.8 H4.6 V3.3 H1.4 C0.4 3.3 0 4.1 0 5.1 C0 6.2 0.5 6.9 1.4 6.9 H2.2 V5.6 C2.2 4.7 2.9 4.1 3.8 4.1 H5.6 C6.3 4.1 6.8 3.6 6.8 2.9 V1.6 C6.8 0.6 5.9 0 4.4 0 Z"/><path fill="#f2c037" d="M4.6 9 C6.4 9 6.8 8.2 6.8 7.4 V6.2 H4.4 V5.7 H7.6 C8.6 5.7 9 4.9 9 3.9 C9 2.8 8.5 2.1 7.6 2.1 H6.8 V3.4 C6.8 4.3 6.1 4.9 5.2 4.9 H3.4 C2.7 4.9 2.2 5.4 2.2 6.1 V7.4 C2.2 8.4 3.1 9 4.6 9 Z"/><circle cx="3.4" cy="1.4" r="0.5" fill="#d8e4ee"/><circle cx="5.6" cy="7.6" r="0.5" fill="#6b5a20"/></g></svg>
<span class="t " style="left:652px;top:57.0px;line-height:20px;font-family:'Liberation Sans','Noto Sans CJK SC',sans-serif;font-size:13px;font-weight:normal;color:#bbbbbb;letter-spacing:0.06px;">track.py</span>
<svg style="left:705px;top:63px;" width="8" height="8" viewBox="0 0 8 8"><path d="M0.5 0.5 L7.5 7.5 M7.5 0.5 L0.5 7.5" stroke="#636668" stroke-width="1" fill="none"/></svg>
<svg style="left:728px;top:59px;" width="16" height="16" viewBox="0 0 16 16"><path fill="#9aa7b0" fill-opacity="0.8" d="M7 1 L3 5 L7 5 Z"/><path fill="#9aa7b0" fill-opacity="0.8" d="M8 1 V6 H3 V15 H6 V8 H13 V1 Z"/><g transform="translate(6.575,6.575) scale(1.05)"><path fill="#3f7eae" d="M4.4 0 C2.6 0 2.2 0.8 2.2 1.6 V2.8 H4.6 V3.3 H1.4 C0.4 3.3 0 4.1 0 5.1 C0 6.2 0.5 6.9 1.4 6.9 H2.2 V5.6 C2.2 4.7 2.9 4.1 3.8 4.1 H5.6 C6.3 4.1 6.8 3.6 6.8 2.9 V1.6 C6.8 0.6 5.9 0 4.4 0 Z"/><path fill="#f2c037" d="M4.6 9 C6.4 9 6.8 8.2 6.8 7.4 V6.2 H4.4 V5.7 H7.6 C8.6 5.7 9 4.9 9 3.9 C9 2.8 8.5 2.1 7.6 2.1 H6.8 V3.4 C6.8 4.3 6.1 4.9 5.2 4.9 H3.4 C2.7 4.9 2.2 5.4 2.2 6.1 V7.4 C2.2 8.4 3.1 9 4.6 9 Z"/><circle cx="3.4" cy="1.4" r="0.5" fill="#d8e4ee"/><circle cx="5.6" cy="7.6" r="0.5" fill="#6b5a20"/></g></svg>
<span class="t " style="left:748px;top:57.0px;line-height:20px;font-family:'Liberation Sans','Noto Sans CJK SC',sans-serif;font-size:13px;font-weight:normal;color:#bbbbbb;letter-spacing:0.02px;">basetrack.py</span>
<svg style="left:829px;top:63px;" width="8" height="8" viewBox="0 0 8 8"><path d="M0.5 0.5 L7.5 7.5 M7.5 0.5 L0.5 7.5" stroke="#636668" stroke-width="1" fill="none"/></svg>
<div style="left:844px;top:53px;width:121px;height:26px;background:#4e5254;"></div>
<div style="left:844px;top:76px;width:121px;height:3px;background:#747a80;"></div>
<svg style="left:852px;top:59px;" width="16" height="16" viewBox="0 0 16 16"><path fill="#9aa7b0" fill-opacity="0.8" d="M7 1 L3 5 L7 5 Z"/><path fill="#9aa7b0" fill-opacity="0.8" d="M8 1 V6 H3 V15 H6 V8 H13 V1 Z"/><g transform="translate(6.575,6.575) scale(1.05)"><path fill="#3f7eae" d="M4.4 0 C2.6 0 2.2 0.8 2.2 1.6 V2.8 H4.6 V3.3 H1.4 C0.4 3.3 0 4.1 0 5.1 C0 6.2 0.5 6.9 1.4 6.9 H2.2 V5.6 C2.2 4.7 2.9 4.1 3.8 4.1 H5.6 C6.3 4.1 6.8 3.6 6.8 2.9 V1.6 C6.8 0.6 5.9 0 4.4 0 Z"/><path fill="#f2c037" d="M4.6 9 C6.4 9 6.8 8.2 6.8 7.4 V6.2 H4.4 V5.7 H7.6 C8.6 5.7 9 4.9 9 3.9 C9 2.8 8.5 2.1 7.6 2.1 H6.8 V3.4 C6.8 4.3 6.1 4.9 5.2 4.9 H3.4 C2.7 4.9 2.2 5.4 2.2 6.1 V7.4 C2.2 8.4 3.1 9 4.6 9 Z"/><circle cx="3.4" cy="1.4" r="0.5" fill="#d8e4ee"/><circle cx="5.6" cy="7.6" r="0.5" fill="#6b5a20"/></g></svg>
<span class="t " style="left:872px;top:57.0px;line-height:20px;font-family:'Liberation Sans','Noto Sans CJK SC',sans-serif;font-size:13px;font-weight:normal;color:#bbbbbb;letter-spacing:0.05px;">trackTest.py</span>
<svg style="left:949px;top:63px;" width="8" height="8" viewBox="0 0 8 8"><path d="M0.5 0.5 L7.5 7.5 M7.5 0.5 L0.5 7.5" stroke="#636668" stroke-width="1" fill="none"/></svg>
<svg style="left:972px;top:59px;" width="16" height="16" viewBox="0 0 16 16"><path fill="#9aa7b0" fill-opacity="0.8" d="M7 1 L3 5 L7 5 Z"/><path fill="#9aa7b0" fill-opacity="0.8" d="M8 1 V6 H3 V15 H13 V1 Z"/><path stroke="#3c3f41" stroke-opacity="0.85" stroke-width="1" d="M5 8.5 H11 M5 10.5 H11 M5 12.5 H9"/></svg>
<span class="t " style="left:992px;top:57.0px;line-height:20px;font-family:'Liberation Sans','Noto Sans CJK SC',sans-serif;font-size:13px;font-weight:normal;color:#bbbbbb;letter-spacing:0.05px;">requirements.txt</span>
<svg style="left:1093px;top:63px;" width="8" height="8" viewBox="0 0 8 8"><path d="M0.5 0.5 L7.5 7.5 M7.5 0.5 L0.5 7.5" stroke="#636668" stroke-width="1" fill="none"/></svg>
<svg style="left:1116px;top:59px;" width="16" height="16" viewBox="0 0 16 16"><path fill="#9aa7b0" fill-opacity="0.8" d="M7 1 L3 5 L7 5 Z"/><path fill="#9aa7b0" fill-opacity="0.8" d="M8 1 V6 H3 V15 H13 V1 Z"/><path stroke="#3c3f41" stroke-opacity="0.85" stroke-width="1" d="M5 8.5 H11 M5 10.5 H11 M5 12.5 H9"/></svg>
<span class="t " style="left:1136px;top:57.0px;line-height:20px;font-family:'Liberation Sans','Noto Sans CJK SC',sans-serif;font-size:13px;font-weight:normal;color:#bbbbbb;letter-spacing:0.07px;">requirements-all.txt</span>
<svg style="left:1255px;top:63px;" width="8" height="8" viewBox="0 0 8 8"><path d="M0.5 0.5 L7.5 7.5 M7.5 0.5 L0.5 7.5" stroke="#636668" stroke-width="1" fill="none"/></svg>
<svg style="left:1278px;top:59px;" width="16" height="16" viewBox="0 0 16 16"><path fill="#9aa7b0" fill-opacity="0.8" d="M7 1 L3 5 L7 5 Z"/><path fill="#9aa7b0" fill-opacity="0.8" d="M8 1 V6 H3 V15 H6 V8 H13 V1 Z"/><g transform="translate(6.575,6.575) scale(1.05)"><path fill="#3f7eae" d="M4.4 0 C2.6 0 2.2 0.8 2.2 1.6 V2.8 H4.6 V3.3 H1.4 C0.4 3.3 0 4.1 0 5.1 C0 6.2 0.5 6.9 1.4 6.9 H2.2 V5.6 C2.2 4.7 2.9 4.1 3.8 4.1 H5.6 C6.3 4.1 6.8 3.6 6.8 2.9 V1.6 C6.8 0.6 5.9 0 4.4 0 Z"/><path fill="#f2c037" d="M4.6 9 C6.4 9 6.8 8.2 6.8 7.4 V6.2 H4.4 V5.7 H7.6 C8.6 5.7 9 4.9 9 3.9 C9 2.8 8.5 2.1 7.6 2.1 H6.8 V3.4 C6.8 4.3 6.1 4.9 5.2 4.9 H3.4 C2.7 4.9 2.2 5.4 2.2 6.1 V7.4 C2.2 8.4 3.1 9 4.6 9 Z"/><circle cx="3.4" cy="1.4" r="0.5" fill="#d8e4ee"/><circle cx="5.6" cy="7.6" r="0.5" fill="#6b5a20"/></g></svg>
<span class="t " style="left:1298px;top:57.0px;line-height:20px;font-family:'Liberation Sans','Noto Sans CJK SC',sans-serif;font-size:13px;font-weight:normal;color:#bbbbbb;letter-spacing:0.03px;">trackTest2.py</span>
<svg style="left:1382px;top:63px;" width="8" height="8" viewBox="0 0 8 8"><path d="M0.5 0.5 L7.5 7.5 M7.5 0.5 L0.5 7.5" stroke="#636668" stroke-width="1" fill="none"/></svg>
<svg style="left:1405px;top:59px;" width="16" height="16" viewBox="0 0 16 16"><path fill="#9aa7b0" fill-opacity="0.8" d="M7 1 L3 5 L7 5 Z"/><path fill="#9aa7b0" fill-opacity="0.8" d="M8 1 V6 H3 V8 H13 V1 Z"/><rect x="1" y="9" width="15" height="6.7" fill="#4f9d40"/><text x="2.2" y="14.7" font-family="Liberation Sans,sans-serif" font-size="6.4" text-anchor="start" fill="#1f4a18">C</text></svg>
<span class="t " style="left:1425px;top:57.0px;line-height:20px;font-family:'Liberation Sans','Noto Sans CJK SC',sans-serif;font-size:13px;font-weight:normal;color:#bbbbbb;letter-spacing:0.05px;">yolov8s.pt</span>
<svg style="left:1491px;top:63px;" width="8" height="8" viewBox="0 0 8 8"><path d="M0.5 0.5 L7.5 7.5 M7.5 0.5 L0.5 7.5" stroke="#636668" stroke-width="1" fill="none"/></svg>
<div style="left:500px;top:53px;width:2px;height:27px;background:#323537;"></div>
<div style="left:500px;top:80px;width:1399px;height:578px;background:#2b2b2b;"></div>
<div style="left:500px;top:80px;width:57px;height:578px;background:#313335;"></div>
<div style="left:557px;top:80px;width:1px;height:578px;background:#555555;"></div>
<div style="left:558px;top:185px;width:1330px;height:21px;background:#323232;"></div>
<div style="left:1523px;top:80px;width:1px;height:578px;background:#484848;"></div>
<div style="left:1887px;top:82px;width:10px;height:10px;background:#8a845e;"></div>
<div style="left:1890px;top:96px;width:8px;height:376px;background:#4b4d4e;"></div>
<div style="left:1885px;top:575px;width:14px;height:2px;background:#7a7a7a;"></div>
<div style="left:597px;top:412px;width:1px;height:246px;background:#373737;"></div>
<div id="edclip" style="left:500px;top:80px;width:1388px;height:578px;overflow:hidden;">
<span class="ln" style="left:0px;top:1px;color:#606366;">1</span>
<span class="code" style="left:63px;top:0px;"><i class="k">import</i> cv2</span>
<span class="ln" style="left:0px;top:22px;color:#606366;">2</span>
<span class="code" style="left:63px;top:21px;"><i class="k">from</i> ultralytics <i class="k">import</i> YOLO</span>
<span class="ln" style="left:0px;top:43px;color:#606366;">3</span>
<span class="ln" style="left:0px;top:64px;color:#606366;">4</span>
<span class="code" style="left:63px;top:63px;"><i class="c"># <i class="cj">加载</i>YOLOv8<i class="cj">模型</i></i></span>
<span class="ln" style="left:0px;top:85px;color:#606366;">5</span>
<span class="code" style="left:63px;top:84px;">model = YOLO(<i class="s">'<u>yolov</u>8s.pt'</i>)</span>
<span class="ln" style="left:0px;top:106px;color:#a4a3a3;">6</span>
<span class="ln" style="left:0px;top:127px;color:#606366;">7</span>
<span class="code" style="left:63px;top:126px;"><i class="c"># <i class="cj">打开视频文件</i></i></span>
<span class="ln" style="left:0px;top:148px;color:#606366;">8</span>
<span class="code" style="left:63px;top:147px;">video_path = <i class="s">"5656365.mp4"</i></span>
<span class="ln" style="left:0px;top:169px;color:#606366;">9</span>
<span class="code" style="left:63px;top:168px;">cap = cv2.VideoCapture(video_path)</span>
<span class="ln" style="left:0px;top:190px;color:#606366;">10</span>
<span class="ln" style="left:0px;top:211px;color:#606366;">11</span>
<span class="code" style="left:63px;top:210px;"><i class="c"># <i class="cj">循环遍历视频帧</i></i></span>
<span class="ln" style="left:0px;top:232px;color:#606366;">12</span>
<span class="code" style="left:63px;top:231px;"><i class="k">while</i> cap.isOpened():</span>
<span class="ln" style="left:0px;top:253px;color:#606366;">13</span>
<span class="code" style="left:63px;top:252px;">    <i class="c"># <i class="cj">从视频读取一帧</i></i></span>
<span class="ln" style="left:0px;top:274px;color:#606366;">14</span>
<span class="code" style="left:63px;top:273px;">    success<i class="k">,</i> frame = cap.read()</span>
<span class="ln" style="left:0px;top:295px;color:#606366;">15</span>
<span class="ln" style="left:0px;top:316px;color:#606366;">16</span>
<span class="code" style="left:63px;top:315px;">    <i class="k">if</i> success:</span>
<span class="ln" style="left:0px;top:337px;color:#606366;">17</span>
<span class="code" style="left:63px;top:336px;">        <i class="c"># <i class="cj">在帧上运行</i>YOLOv8<i class="cj">追踪，持续追踪帧间的物体</i></i></span>
<span class="ln" style="left:0px;top:358px;color:#606366;">18</span>
<span class="code" style="left:63px;top:357px;">        results = model.track(frame<i class="k">,</i> <i class="a">persist</i>=<i class="k">True</i>)</span>
<span class="ln" style="left:0px;top:379px;color:#606366;">19</span>
<span class="ln" style="left:0px;top:400px;color:#606366;">20</span>
<span class="code" style="left:63px;top:399px;">        <i class="c"># <i class="cj">在帧上展示结果</i></i></span>
<span class="ln" style="left:0px;top:421px;color:#606366;">21</span>
<span class="code" style="left:63px;top:420px;">        annotated_frame = results[<i class="n">0</i>].plot()</span>
<span class="ln" style="left:0px;top:442px;color:#606366;">22</span>
<span class="ln" style="left:0px;top:463px;color:#606366;">23</span>
<span class="code" style="left:63px;top:462px;">        cv2.namedWindow(<i class="s">"YOLOv8 Tracking"</i><i class="k">,</i> cv2.WINDOW_NORMAL)</span>
<span class="ln" style="left:0px;top:484px;color:#606366;">24</span>
<span class="code" style="left:63px;top:483px;">        <i class="c"># <i class="cj">展示带注释的帧</i></i></span>
<span class="ln" style="left:0px;top:505px;color:#606366;">25</span>
<span class="code" style="left:63px;top:504px;">        cv2.imshow(<i class="s">"YOLOv8 Tracking"</i><i class="k">,</i> annotated_frame)</span>
<span class="ln" style="left:0px;top:526px;color:#606366;">26</span>
<span class="ln" style="left:0px;top:547px;color:#606366;">27</span>
<span class="code" style="left:63px;top:546px;">        <i class="c"># <i class="cj">如果按下</i>'q'<i class="cj">则退出循环</i></i></span>
<span class="ln" style="left:0px;top:568px;color:#606366;">28</span>
<span class="code" style="left:63px;top:567px;">        <i class="k">if</i> cv2.waitKey(<i class="n">1</i>) &amp; <i class="n">0xFF</i> == <i class="b">ord</i>(<i class="s">"q"</i>):</span>
</div>
<svg style="left:553px;top:86px;" width="9" height="10" viewBox="0 0 9 10"><path d="M0.5 0.5 H8.5 V6 L4.5 9.5 L0.5 6 Z" fill="#2b2b2b" stroke="#606366" stroke-width="1"/><path d="M2.5 4 H6.5" stroke="#606366" stroke-width="1"/></svg>
<svg style="left:553px;top:106px;" width="9" height="10" viewBox="0 0 9 10"><path d="M0.5 9.5 H8.5 V4 L4.5 0.5 L0.5 4 Z" fill="#2b2b2b" stroke="#606366" stroke-width="1"/><path d="M2.5 6 H6.5" stroke="#606366" stroke-width="1"/></svg>
<svg style="left:553px;top:317px;" width="9" height="10" viewBox="0 0 9 10"><path d="M0.5 0.5 H8.5 V6 L4.5 9.5 L0.5 6 Z" fill="#2b2b2b" stroke="#606366" stroke-width="1"/><path d="M2.5 4 H6.5" stroke="#606366" stroke-width="1"/></svg>
<svg style="left:553px;top:401px;" width="9" height="10" viewBox="0 0 9 10"><path d="M0.5 0.5 H8.5 V6 L4.5 9.5 L0.5 6 Z" fill="#2b2b2b" stroke="#606366" stroke-width="1"/><path d="M2.5 4 H6.5" stroke="#606366" stroke-width="1"/></svg>
<div style="left:22px;top:658px;width:1877px;height:24px;background:#3c3f41;"></div>
<div style="left:500px;top:658px;width:1399px;height:24px;background:#393b3d;"></div>
<div style="left:1899px;top:53px;width:11px;height:941px;background:#3c3f41;"></div>
<div style="left:1898px;top:53px;width:1px;height:941px;background:#323232;"></div>
<div style="left:22px;top:682px;width:1877px;height:1px;background:#323232;"></div>
<div style="left:22px;top:683px;width:1877px;height:26px;background:#3c3f41;"></div>
<div style="left:22px;top:708px;width:1877px;height:1px;background:#35383a;"></div>
<span class="t " style="left:28px;top:687.0px;line-height:20px;font-family:'Liberation Sans','Noto Sans CJK SC',sans-serif;font-size:13px;font-weight:normal;color:#bbbbbb;letter-spacing:-0.62px;">Run:</span>
<svg style="left:72px;top:689px;opacity:0.8;" width="16" height="16" viewBox="0 0 16 16"><g transform="translate(0.5750000000000002,0.5750000000000002) scale(1.65)"><path fill="#3f7eae" d="M4.4 0 C2.6 0 2.2 0.8 2.2 1.6 V2.8 H4.6 V3.3 H1.4 C0.4 3.3 0 4.1 0 5.1 C0 6.2 0.5 6.9 1.4 6.9 H2.2 V5.6 C2.2 4.7 2.9 4.1 3.8 4.1 H5.6 C6.3 4.1 6.8 3.6 6.8 2.9 V1.6 C6.8 0.6 5.9 0 4.4 0 Z"/><path fill="#f2c037" d="M4.6 9 C6.4 9 6.8 8.2 6.8 7.4 V6.2 H4.4 V5.7 H7.6 C8.6 5.7 9 4.9 9 3.9 C9 2.8 8.5 2.1 7.6 2.1 H6.8 V3.4 C6.8 4.3 6.1 4.9 5.2 4.9 H3.4 C2.7 4.9 2.2 5.4 2.2 6.1 V7.4 C2.2 8.4 3.1 9 4.6 9 Z"/><circle cx="3.4" cy="1.4" r="0.5" fill="#d8e4ee"/><circle cx="5.6" cy="7.6" r="0.5" fill="#6b5a20"/></g></svg>
<span class="t " style="left:92px;top:687.0px;line-height:20px;font-family:'Liberation Sans','Noto Sans CJK SC',sans-serif;font-size:13px;font-weight:normal;color:#bbbbbb;letter-spacing:0.11px;">trackTest</span>
<svg style="left:152px;top:693px;" width="8" height="8" viewBox="0 0 8 8"><path d="M0.5 0.5 L7.5 7.5 M7.5 0.5 L0.5 7.5" stroke="#636668" stroke-width="1" fill="none"/></svg>
<svg style="left:1852px;top:688px;" width="16" height="16" viewBox="0 0 16 16"><polygon points="6.28,3.73 6.56,1.76 9.44,1.76 9.72,3.73 10.83,4.38 12.68,3.64 14.12,6.13 12.56,7.36 12.56,8.64 14.12,9.87 12.68,12.36 10.83,11.62 9.72,12.27 9.44,14.24 6.56,14.24 6.28,12.27 5.17,11.62 3.32,12.36 1.88,9.87 3.44,8.64 3.44,7.36 1.88,6.13 3.32,3.64 5.17,4.38" fill="#afb1b3" stroke="#afb1b3" stroke-width="0.8" stroke-linejoin="round"/><circle cx="8" cy="8" r="2.1" fill="#3c3f41"/></svg>
<svg style="left:1878px;top:688px;" width="16" height="16" viewBox="0 0 16 16"><rect x="1.7" y="7" width="12.6" height="2" fill="#afb1b3"/></svg>
<div style="left:22px;top:709px;width:58px;height:285px;background:#3c3f41;"></div>
<div style="left:51px;top:713px;width:1px;height:281px;background:#323537;"></div>
<div style="left:79px;top:709px;width:1820px;height:283px;background:#2b2b2b;"></div>
<div style="left:60px;top:706px;width:111px;height:3px;background:#747a80;"></div>
<svg style="left:28px;top:716px;" width="16" height="16" viewBox="0 0 16 16"><path fill="#499c54" d="M4 2 L13 8 L4 14 Z"/></svg>
<svg style="left:28px;top:742px;" width="16" height="16" viewBox="0 0 16 16"><rect x="3" y="3" width="10" height="10" fill="#616365"/></svg>
<div style="left:26px;top:766px;width:20px;height:1px;background:#515456;"></div>
<svg style="left:28px;top:775px;" width="16" height="16" viewBox="0 0 16 16"><rect x="1.5" y="3" width="5.6" height="4.2" fill="#afb1b3"/><rect x="8.6" y="3" width="5.6" height="4.2" fill="#afb1b3"/><rect x="1.5" y="8.6" width="12.7" height="4.4" fill="#afb1b3"/></svg>
<div style="left:26px;top:799px;width:20px;height:1px;background:#515456;"></div>
<svg style="left:28px;top:807px;" width="16" height="16" viewBox="0 0 16 16"><g transform="rotate(45 8 8)"><path fill="#afb1b3" d="M5.2 1 H10.8 V2.4 H9.9 V6.4 L11.6 8.4 V9.6 H4.4 V8.4 L6.1 6.4 V2.4 H5.2 Z"/><path d="M8 9.6 V15.2" stroke="#afb1b3" stroke-width="1.2"/></g></svg>
<svg style="left:57px;top:716px;" width="16" height="16" viewBox="0 0 16 16"><path d="M8 13.5 V3 M3.8 7.2 L8 3 L12.2 7.2" stroke="#5f6366" stroke-width="1.3" fill="none"/></svg>
<svg style="left:57px;top:742px;" width="16" height="16" viewBox="0 0 16 16"><path d="M8 2.5 V13 M3.8 8.8 L8 13 L12.2 8.8" stroke="#5f6366" stroke-width="1.3" fill="none"/></svg>
<svg style="left:57px;top:769px;" width="16" height="16" viewBox="0 0 16 16"><path d="M1.5 3 H14 M1.5 7.2 H11.6 A2.6 2.6 0 0 1 11.6 12.4 H9" stroke="#afb1b3" stroke-width="1.5" fill="none"/><path d="M9.6 9.6 L6.4 12.4 L9.6 15.2 Z" fill="#afb1b3"/><path d="M1.5 12.4 H4.5" stroke="#afb1b3" stroke-width="1.5"/></svg>
<div style="left:54px;top:792px;width:22px;height:22px;background:#4c5052;border-radius:3px;"></div>
<svg style="left:57px;top:795px;" width="16" height="16" viewBox="0 0 16 16"><path d="M1.5 5 H5.5 M1.5 9 H5.5 M1.5 13.5 H14.5" stroke="#afb1b3" stroke-width="1.5" fill="none"/><path d="M10.5 1.5 V8" stroke="#afb1b3" stroke-width="1.6"/><path d="M6.8 6.6 H14.2 L10.5 10.8 Z" fill="#afb1b3"/></svg>
<svg style="left:57px;top:821px;" width="16" height="16" viewBox="0 0 16 16"><rect x="4" y="1.5" width="8" height="3" fill="#afb1b3"/><path fill="#afb1b3" d="M1.5 5.5 H14.5 V11.5 H12 V9 H4 V11.5 H1.5 Z"/><rect x="4.8" y="10" width="6.4" height="4.5" fill="none" stroke="#afb1b3" stroke-width="1.4"/></svg>
<svg style="left:57px;top:847px;" width="16" height="16" viewBox="0 0 16 16"><path fill="#afb1b3" d="M6 1.5 H10 V3 H13.5 V4.6 H2.5 V3 H6 Z"/><path fill="#afb1b3" d="M3.6 5.6 H12.4 V14.5 H3.6 Z"/></svg>
<div id="conclip" style="left:80px;top:709px;width:1819px;height:285px;overflow:hidden;">
<span class="con" style="left:12px;top:-10.5px;">Speed: 4.0ms preprocess, 202.7ms inference, 2.0ms postprocess per image at shape (1, 3, 384, 640)</span>
<span class="con" style="left:12px;top:31.5px;">0: 384x640 4 persons, 1 bowl, 216.3ms</span>
<span class="con" style="left:12px;top:52.5px;">Speed: 2.0ms preprocess, 216.3ms inference, 3.0ms postprocess per image at shape (1, 3, 384, 640)</span>
<span class="con" style="left:12px;top:94.5px;">0: 384x640 4 persons, 1 bowl, 215.4ms</span>
<span class="con" style="left:12px;top:115.5px;">Speed: 3.0ms preprocess, 215.4ms inference, 2.0ms postprocess per image at shape (1, 3, 384, 640)</span>
<span class="con" style="left:12px;top:157.5px;">0: 384x640 4 persons, 1 bowl, 200.9ms</span>
<span class="con" style="left:12px;top:178.5px;">Speed: 3.0ms preprocess, 200.9ms inference, 2.0ms postprocess per image at shape (1, 3, 384, 640)</span>
<span class="con" style="left:12px;top:241.5px;">Process finished with exit code -1</span>
</div>
<div style="left:0px;top:992px;width:1910px;height:2px;background:#424547;"></div>
<div style="left:1555px;top:854px;width:338px;height:69px;background:#4e5254;border:1px solid #5e6162;box-sizing:border-box;box-shadow:0 2px 6px rgba(0,0,0,0.35);"></div>
<svg style="left:1565px;top:861px;" width="16" height="16" viewBox="0 0 16 16"><circle cx="8" cy="8" r="7" fill="#35a1dc"/><rect x="7" y="7" width="2" height="5" fill="#e8f2f8"/><rect x="7" y="4" width="2" height="2" fill="#e8f2f8"/></svg>
<span class="t " style="left:1587px;top:859.0px;line-height:20px;font-family:'Liberation Sans','Noto Sans CJK SC',sans-serif;font-size:13px;font-weight:bold;color:#d0d0d0;letter-spacing:0.02px;">Looks like you&#x27;re using NumPy</span>
<span class="t " style="left:1587px;top:880.0px;line-height:20px;font-family:'Liberation Sans','Noto Sans CJK SC',sans-serif;font-size:13px;font-weight:normal;color:#bbbbbb;letter-spacing:0.17px;">Would you like to turn scientific mode on?</span>
<span class="t " style="left:1587px;top:896.5px;line-height:20px;font-family:'Liberation Sans','Noto Sans CJK SC',sans-serif;font-size:13px;font-weight:normal;color:#5694ea;letter-spacing:0.01px;">Use scientific mode</span>
<span class="t " style="left:1712px;top:896.5px;line-height:20px;font-family:'Liberation Sans','Noto Sans CJK SC',sans-serif;font-size:13px;font-weight:normal;color:#5694ea;letter-spacing:0.02px;">Keep current layout...</span>
<svg style="left:1871px;top:903px;" width="10" height="7" viewBox="0 0 10 7"><path d="M1 1 L5 5.5 L9 1" stroke="#6e7173" stroke-width="1.3" fill="none"/></svg>
<div style="left:1555px;top:935px;width:338px;height:49px;background:#4e5254;border:1px solid #5e6162;box-sizing:border-box;box-shadow:0 2px 6px rgba(0,0,0,0.35);"></div>
<svg style="left:1565px;top:942px;" width="16" height="16" viewBox="0 0 16 16"><circle cx="8" cy="8" r="7" fill="#35a1dc"/><rect x="7" y="7" width="2" height="5" fill="#e8f2f8"/><rect x="7" y="4" width="2" height="2" fill="#e8f2f8"/></svg>
<span class="t " style="left:1587px;top:940.0px;line-height:20px;font-family:'Liberation Sans','Noto Sans CJK SC',sans-serif;font-size:13px;font-weight:bold;color:#d0d0d0;letter-spacing:-0.15px;">PyCharm 2020.1.5 available</span>
<span class="t " style="left:1587px;top:957.5px;line-height:20px;font-family:'Liberation Sans','Noto Sans CJK SC',sans-serif;font-size:13px;font-weight:normal;color:#5694ea;letter-spacing:-0.09px;">Update...</span>
<span class="t " style="left:1742px;top:966.0px;line-height:22px;font-family:'Liberation Sans','Noto Serif CJK SC','Noto Sans CJK SC',serif;font-size:18px;font-weight:normal;color:rgba(255,255,255,0.55);letter-spacing:-0.25px;text-shadow:0 0 2px rgba(0,0,0,0.6);">@稀土掘金技术社区</span>
<div style="left:1720px;top:253px;width:144px;height:36px;background:#fdfdfd;border:2.5px solid #cdcdcd;border-radius:11px;box-sizing:border-box;box-shadow:0 0 3px rgba(0,0,0,0.5);"></div>
<span class="t " style="left:1729px;top:259.0px;line-height:24px;font-family:'Noto Sans CJK SC',sans-serif;font-size:19px;font-weight:900;color:#e8596e;letter-spacing:0;">中</span>
<span class="t " style="left:1755px;top:259.0px;line-height:24px;font-family:'Noto Sans CJK SC',sans-serif;font-size:19px;font-weight:900;color:#8fbf4d;letter-spacing:0;">简</span>
<span class="t " style="left:1780px;top:259.0px;line-height:24px;font-family:'Noto Sans CJK SC',sans-serif;font-size:19px;font-weight:900;color:#8fbf4d;letter-spacing:0;">键</span>
<svg style="left:1800px;top:236px;" width="66" height="54" viewBox="0 0 66 54"><path d="M3 33 Q6 28 12 31 Q17 34 13 37 Q6 39 3 33 Z" fill="#8a5a55"/><circle cx="7" cy="32" r="1.2" fill="#e3c0b8"/><circle cx="10.5" cy="34.5" r="1.1" fill="#c98f8a"/><circle cx="9" cy="40" r="1.1" fill="#5a4a4a"/><path d="M12 36 L30 50" stroke="#a9a9a9" stroke-width="1.5"/><path d="M24 40 H54 L52 45 H26 Z" fill="#dfe8df"/><path d="M27 42.5 H51" stroke="#a8c6aa" stroke-width="1.6"/><path d="M52 19 Q65 13 63 23 Q60 31 50 33" fill="none" stroke="#6b6e74" stroke-width="3.6"/><path d="M52 19 Q65 13 63 23 Q60 31 50 33" fill="none" stroke="#f4f4f4" stroke-width="2"/><path d="M23.5 17 H52 V28 Q52 39.5 41 39.5 H34.5 Q23.5 39.5 23.5 28 Z" fill="#f8f9fb" stroke="#9a9da3" stroke-width="0.8"/><path d="M23.5 17.5 H52" stroke="#6f7580" stroke-width="1.4"/><g><circle cx="28" cy="13" r="4.5" fill="#e9869c"/><circle cx="34" cy="8" r="5" fill="#f3b0a8"/><circle cx="42" cy="8" r="5" fill="#e8788f"/><circle cx="49" cy="12" r="5" fill="#f2a3b5"/><circle cx="31" cy="15" r="4" fill="#c9dc7a"/><circle cx="38" cy="13" r="4.5" fill="#b5d25e"/><circle cx="45" cy="15" r="4" fill="#d3e28a"/><circle cx="34" cy="10" r="2.2" fill="#f6e08e"/><circle cx="42" cy="12" r="2" fill="#f6e6a0"/><circle cx="27" cy="7" r="2.4" fill="#f0c9b0"/><circle cx="52" cy="8" r="2.2" fill="#e9869c"/><circle cx="30" cy="3.5" r="2" fill="#f3d9c0"/><circle cx="38" cy="3" r="2.4" fill="#f3b2c0"/><circle cx="46" cy="4" r="2.2" fill="#d9e79a"/></g><text x="37.5" y="37.5" font-family="Liberation Serif,serif" font-weight="bold" font-size="17" text-anchor="middle" fill="#23283a">5</text></svg>
<svg style="left:1602px;top:388px;filter:drop-shadow(0 0 1px rgba(0,0,0,0.5));" width="52" height="52" viewBox="0 0 52 52"><circle cx="26" cy="26" r="25.5" fill="#ffffff"/><circle cx="26" cy="26" r="22.6" fill="#7cccf9"/><path d="M3.6 22 Q12 16 22 20.5 Q32 25 48.4 22.5 A22.6 22.6 0 0 0 3.6 22 Z" fill="#3b8df2"/><path d="M3.4 26 Q12 19 22 23.5 Q32 28 48.6 25.5 L48.4 22.5 Q32 25 22 20.5 Q12 16 3.6 22 Z" fill="#5aaef7"/><path d="M9 26 H22 M29 26 H42" stroke="#d9f0fd" stroke-width="0.9"/><circle cx="25.5" cy="24" r="0.8" fill="#e8f6ff"/><circle cx="25.5" cy="28" r="0.8" fill="#e8f6ff"/><path d="M30 9 Q36 10 39 15" stroke="#cfe6fb" stroke-width="0.9" fill="none"/></svg>
<div id="rsclip" style="left:1899px;top:53px;width:11px;height:941px;overflow:hidden;">
<span class="vt" style="left:17.6px;top:27px;transform:rotate(90deg);font-size:12px;color:#bbbbbb;letter-spacing:-0.30px;">Database</span>
<span class="vt" style="left:17.6px;top:109px;transform:rotate(90deg);font-size:12px;color:#bbbbbb;letter-spacing:0.27px;">Remote Host</span>
<span class="vt" style="left:17.6px;top:221px;transform:rotate(90deg);font-size:12px;color:#bbbbbb;letter-spacing:-0.21px;">SciView</span>
</div>
<svg style="left:1904px;top:63px;" width="8" height="12" viewBox="0 0 8 12"><ellipse cx="6" cy="2" rx="5" ry="1.6" fill="#afb1b3"/><path d="M1 3.4 V8.4 Q6 11 11 8.4 V3.4 Q6 6 1 3.4Z" fill="#afb1b3"/></svg>
<svg style="left:1905px;top:150px;" width="7" height="8" viewBox="0 0 7 8"><rect x="0" y="0" width="3" height="3" fill="#afb1b3"/><rect x="4" y="0" width="3" height="3" fill="#afb1b3"/><rect x="0" y="4" width="3" height="3" fill="#afb1b3"/><rect x="4" y="4" width="3" height="3" fill="#afb1b3"/></svg>
<svg style="left:1904px;top:259px;" width="7" height="10" viewBox="0 0 7 10"><rect x="0" y="0" width="3" height="3" fill="#d0d0d0"/><rect x="4" y="0" width="3" height="3" fill="#d0d0d0"/><rect x="0" y="4" width="3" height="3" fill="#d0d0d0"/><rect x="4" y="4" width="3" height="3" fill="#d0d0d0"/></svg>
</div>
</body></html>
